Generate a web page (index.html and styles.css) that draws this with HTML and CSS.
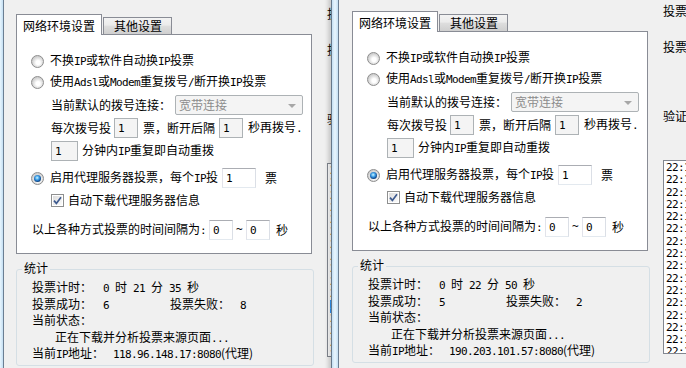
FILE: index.html
```html
<!DOCTYPE html>
<html lang="zh-CN">
<head>
<meta charset="utf-8">
<title>投票</title>
<link rel="stylesheet" href="styles.css">
</head>
<body>
<div class="win win-a">
  <div class="frame"></div>
  <div class="client">
    <div class="leftcol">
      <div class="tabs">
        <div class="tab act">网络环境设置</div>
        <div class="tab">其他设置</div>
      </div>
      <div class="page">
        <div class="row r1"><span class="radio"></span><span class="rt">不换<span class="m">IP</span>或软件自动换<span class="m">IP</span>投票</span></div>
        <div class="row r2"><span class="radio"></span><span class="rt">使用<span class="m">Adsl</span>或<span class="m">Modem</span>重复拨号<span class="m">/</span>断开换<span class="m">IP</span>投票</span></div>
        <div class="row r3 ind"><span>当前默认的拨号连接：</span><span class="combo"><span>宽带连接</span><i class="arrow"></i></span></div>
        <div class="row r4 ind"><span>每次拨号投</span><span class="box dis b-dial"><span class="m">1</span></span><span class="t-a">票，断开后隔</span><span class="box dis b-dial2"><span class="m">1</span></span><span class="t-b">秒再拨号<span class="m">.</span></span></div>
        <div class="row r5 ind"><span class="box dis b-min"><span class="m">1</span></span><span class="t-c">分钟内<span class="m">IP</span>重复即自动重拨</span></div>
        <div class="row r6"><span class="radio on"></span><span class="rt">启用代理服务器投票，每个<span class="m">IP</span>投</span><span class="box b-ip"><span class="m">1</span></span><span class="t-d">票</span></div>
        <div class="row r7 ind"><span class="check"><svg width="9" height="9" viewBox="0 0 9 9"><path d="M1 4.6 L3.4 7.4 L8 1.2" fill="none" stroke="#3d5a8f" stroke-width="1.7"/></svg></span><span class="t-e">自动下载代理服务器信息</span></div>
        <div class="row r8"><span>以上各种方式投票的时间间隔为<span class="m">:</span></span><span class="box b-int"><span class="m">0</span></span><span class="tilde m">~</span><span class="box b-int2"><span class="m">0</span></span><span class="t-f">秒</span></div>
      </div>
      <div class="grp">
        <span class="legend">统计</span>
        <div class="line"><span class="lab w71">投票计时：</span><span class="m">0 </span>时<span class="m"> 21 </span>分<span class="m"> 35 </span>秒</div>
        <div class="line"><span class="lab w71">投票成功：</span><span class="val m">6</span><span class="lab w70">投票失败：</span><span class="m">8</span></div>
        <div class="line">当前状态：</div>
        <div class="line status">正在下载并分析投票来源页面<span class="m">...</span></div>
        <div class="line"><span class="lab w81">当前<span class="m">IP</span>地址：</span><span class="m">118.96.148.17:8080</span>(代理)</div>
      </div>
    </div>
    <div class="rightcol">
      <div class="lbl l1">投票</div>
      <div class="lbl l2">投票</div>
      <div class="lbl l3">验证</div>
      <div class="list">
        <div class="it">22:14:02</div><div class="it">22:14:09</div><div class="it">22:14:17</div><div class="it">22:14:25</div><div class="it">22:14:33</div><div class="it">22:14:41</div><div class="it">22:14:50</div><div class="it">22:14:58</div><div class="it">22:15:06</div><div class="it">22:15:13</div><div class="it">22:15:21</div><div class="it sel">22:15:30</div><div class="it">22:15:38</div><div class="it">22:15:46</div><div class="it">22:15:55</div><div class="it">22:16:01</div>
      </div>
    </div>
  </div>
</div>

<div class="win win-b">
  <div class="frame"></div>
  <div class="client">
    <div class="leftcol">
      <div class="tabs">
        <div class="tab act">网络环境设置</div>
        <div class="tab">其他设置</div>
      </div>
      <div class="page">
        <div class="row r1"><span class="radio"></span><span class="rt">不换<span class="m">IP</span>或软件自动换<span class="m">IP</span>投票</span></div>
        <div class="row r2"><span class="radio"></span><span class="rt">使用<span class="m">Adsl</span>或<span class="m">Modem</span>重复拨号<span class="m">/</span>断开换<span class="m">IP</span>投票</span></div>
        <div class="row r3 ind"><span>当前默认的拨号连接：</span><span class="combo"><span>宽带连接</span><i class="arrow"></i></span></div>
        <div class="row r4 ind"><span>每次拨号投</span><span class="box dis b-dial"><span class="m">1</span></span><span class="t-a">票，断开后隔</span><span class="box dis b-dial2"><span class="m">1</span></span><span class="t-b">秒再拨号<span class="m">.</span></span></div>
        <div class="row r5 ind"><span class="box dis b-min"><span class="m">1</span></span><span class="t-c">分钟内<span class="m">IP</span>重复即自动重拨</span></div>
        <div class="row r6"><span class="radio on"></span><span class="rt">启用代理服务器投票，每个<span class="m">IP</span>投</span><span class="box b-ip"><span class="m">1</span></span><span class="t-d">票</span></div>
        <div class="row r7 ind"><span class="check"><svg width="9" height="9" viewBox="0 0 9 9"><path d="M1 4.6 L3.4 7.4 L8 1.2" fill="none" stroke="#3d5a8f" stroke-width="1.7"/></svg></span><span class="t-e">自动下载代理服务器信息</span></div>
        <div class="row r8"><span>以上各种方式投票的时间间隔为<span class="m">:</span></span><span class="box b-int"><span class="m">0</span></span><span class="tilde m">~</span><span class="box b-int2"><span class="m">0</span></span><span class="t-f">秒</span></div>
      </div>
      <div class="grp">
        <span class="legend">统计</span>
        <div class="line"><span class="lab w71">投票计时：</span><span class="m">0 </span>时<span class="m"> 22 </span>分<span class="m"> 50 </span>秒</div>
        <div class="line"><span class="lab w71">投票成功：</span><span class="val m">5</span><span class="lab w70">投票失败：</span><span class="m">2</span></div>
        <div class="line">当前状态：</div>
        <div class="line status">正在下载并分析投票来源页面<span class="m">...</span></div>
        <div class="line"><span class="lab w81">当前<span class="m">IP</span>地址：</span><span class="m">190.203.101.57:8080</span>(代理)</div>
      </div>
    </div>
    <div class="rightcol">
      <div class="lbl l1">投票</div>
      <div class="lbl l2">投票</div>
      <div class="lbl l3">验证</div>
      <div class="list">
        <div class="it">22:16:02</div><div class="it">22:16:09</div><div class="it">22:16:17</div><div class="it">22:16:25</div><div class="it">22:16:33</div><div class="it">22:16:41</div><div class="it">22:16:50</div><div class="it">22:16:58</div><div class="it">22:17:06</div><div class="it">22:17:13</div><div class="it">22:17:21</div><div class="it">22:17:30</div><div class="it">22:17:38</div><div class="it">22:17:46</div><div class="it">22:17:55</div><div class="it">22:18:03</div>
      </div>
    </div>
  </div>
</div>
</body>
</html>
```

FILE: styles.css
```css
* { box-sizing: border-box; margin: 0; padding: 0; }
html, body { width: 686px; height: 368px; overflow: hidden; }
body {
  background: #f0f0f0;
  font-family: "Noto Sans CJK SC", "Noto Sans CJK JP", sans-serif;
  font-size: 12px;
  line-height: 12px;
  color: #000;
  position: relative;
}
.m {
  font-family: "DejaVu Sans Mono", "Liberation Mono", monospace;
  font-size: 11px;
  letter-spacing: -0.62px;
  white-space: pre;
}

/* windows on the desktop */
.win {
  position: absolute;
  top: 0;
  height: 380px;
  width: 420px;
  display: flex;
  background: #f0f0f0;
}
.win-a { left: -4px; }
.win-b { left: 331px; top: -3px; box-shadow: -3px 0 4px rgba(0, 0, 0, 0.16); }
.frame {
  width: 8px;
  flex: none;
  background: linear-gradient(90deg, #66788a 0 1px, #c4dff3 1px, #e9f6fe 50%, #c4dff3 calc(100% - 1px), #6b7e92 calc(100% - 1px));
}
.client { display: flex; padding-left: 13px; }
.win-a .client { padding-left: 12px; }

.leftcol { width: 298px; flex: none; padding-top: 14px; }

/* tabs */
.tabs { display: flex; align-items: flex-start; height: 21px; margin-bottom: -1px; position: relative; z-index: 1; }
.tab {
  margin-top: 3px;
  height: 17px;
  margin-left: 1px;
  padding: 0 9px 0 10px;
  border: 1px solid #898c95;
  border-bottom: none;
  background: linear-gradient(#f3f3f3, #ebebeb 45%, #dedede 50%, #cfcfcf);
  line-height: 16px;
}
.tab.act {
  margin: 0;
  height: 21px;
  padding: 1px 6px 0;
  background: #fff;
  line-height: 19px;
}

.page {
  width: 296px;
  height: 220px;
  border: 1px solid #898c95;
  background: #fff;
  padding: 16px 0 0 14px;
}
.row { display: flex; align-items: center; height: 20px; white-space: nowrap; }
.r2 { margin-top: 1px; }
.r3 { margin-top: 3px; }
.r4 { margin-top: 3px; }
.r5 { margin-top: 3px; }
.r6 { margin-top: 7px; }
.r7 { margin-top: 2px; }
.r8 { margin-top: 10px; margin-left: 1px; }
.ind { margin-left: 20px; }
.rt { margin-left: 6px; }

.radio {
  flex: none;
  width: 13px;
  height: 13px;
  border-radius: 50%;
  border: 1px solid #8d8d8d;
  background: radial-gradient(circle at 55% 60%, #ffffff 0 2px, #e6e6e6 4px, #cfcfcf 6px);
  position: relative;
}
.radio.on::after {
  content: "";
  position: absolute;
  left: 2px; top: 2px;
  width: 7px; height: 7px;
  border-radius: 50%;
  background: radial-gradient(circle at 45% 40%, #d8f3ff 0, #5cb8f0 1.5px, #1e6fc0 3px, #0c3f78 4px);
}
.check {
  flex: none;
  width: 13px; height: 13px;
  border: 1px solid #8e8f8f;
  background: #fff;
  padding: 1px;
}
.check svg {
  display: block;
  width: 9px; height: 9px;
  background: linear-gradient(135deg, #dcdcdc, #fbfbfb);
}

.box {
  flex: none;
  height: 20px;
  border: 1px solid #abadb3;
  border-color: #abadb3 #dbdfe6 #e3e9ef #e2e3ea;
  background: #fff;
  padding: 2px 0 0 3px;
  line-height: 12px;
}
.box.dis { background: #f4f4f4; border-color: #adb2b5; }
.b-dial { width: 24px; margin-left: 3px; }
.t-a { margin-left: 5px; }
.b-dial2 { width: 24px; margin-left: 4px; }
.t-b { margin-left: 5px; }
.b-min { width: 27px; }
.t-c { margin-left: 4px; }
.b-ip { width: 34px; margin-left: 4px; }
.t-d { margin-left: 9px; }
.t-e { margin-left: 4px; }
.b-int { width: 24px; margin-left: 3px; }
.tilde { margin: 0 4px 0 3px; }
.b-int2 { width: 24px; }
.t-f { margin-left: 6px; }

.combo {
  position: relative;
  width: 128px;
  height: 20px;
  margin-left: 4px;
  border: 1px solid #adb2b5;
  border-radius: 2px;
  background: #f4f4f4;
  color: #8c8c8c;
  padding: 3px 0 0 3px;
}
.arrow {
  position: absolute;
  right: 6px; top: 8px;
  border-left: 4px solid transparent;
  border-right: 4px solid transparent;
  border-top: 4px solid #a7a7a7;
}

/* group box */
.grp {
  position: relative;
  width: 298px;
  height: 97px;
  margin-top: 15px;
  border: 1px solid #d5dfe5;
  border-radius: 3px;
  padding: 9px 0 0 15px;
}
.legend {
  position: absolute;
  left: 5px; top: -8px;
  padding: 0 2px;
  line-height: 12px;
  background: #f0f0f0;
}
.line { height: 16.5px; line-height: 16.5px; white-space: nowrap; }
.lab { display: inline-block; }
.w71 { width: 71px; }
.w70 { width: 70px; }
.w81 { width: 81px; }
.val { display: inline-block; width: 67px; }
.status { padding-left: 23px; }

/* right column */
.rightcol { flex: none; width: 200px; padding-left: 13px; }
.lbl { height: 12px; }
.l1 { margin-top: 8px; }
.l2 { margin-top: 24px; }
.l3 { margin-top: 57px; }
.list {
  margin-top: 38px;
  width: 120px;
  height: 194px;
  border: 1px solid #828790;
  background: #fff;
  padding: 1px 0 0 2px;
  overflow: hidden;
}
.it { height: 12.3px; line-height: 12.3px; font-family: "DejaVu Sans Mono", monospace; font-size: 11px; letter-spacing: -0.62px; }
.it.sel { background: #3399ff; color: #fff; }
```
